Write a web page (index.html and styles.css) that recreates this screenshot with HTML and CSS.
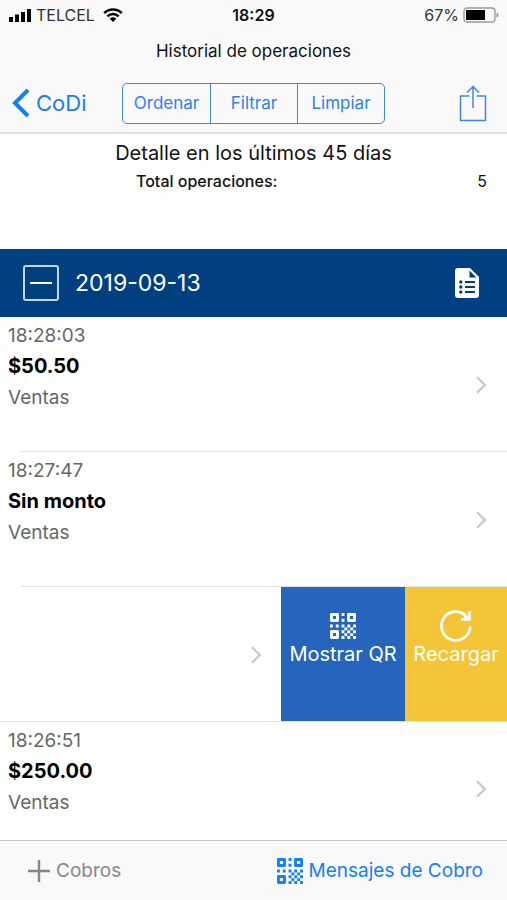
FILE: index.html
```html
<!DOCTYPE html>
<html lang="es">
<head>
<meta charset="utf-8">
<meta name="viewport" content="width=device-width, initial-scale=1">
<title>Historial de operaciones</title>
<link rel="stylesheet" href="styles.css">
</head>
<body>
<svg class="sprite" aria-hidden="true">
  <symbol id="qr" viewBox="0 0 18 18">
    <path fill="none" stroke="currentColor" stroke-width="2" stroke-linejoin="round" d="M1 1h4.200v4.200H1zM12.800 1H17v4.200h-4.200zM1 12.800h4.200V17H1z"/>
    <path fill="currentColor" d="M8 0h2v2H8zM8 4h2v2H8zM0 8h2v2H0zM4 8h2v2H4zM8 8h2v2H8zM12 8h2v2h-2zM16 8h2v2h-2zM10 10h2v2h-2zM14 10h2v2h-2zM8 12h2v2H8zM12 12h2v2h-2zM16 12h2v2h-2zM10 14h2v2h-2zM14 14h2v2h-2zM8 16h2v2H8zM12 16h2v2h-2zM16 16h2v2h-2z"/>
  </symbol>
  <symbol id="chevron" viewBox="0 0 12 18">
    <path fill="none" stroke="currentColor" stroke-width="2.2" d="M2 1.2 9.8 9 2 16.8"/>
  </symbol>
</svg>
<div class="app">
  <header class="top">
    <div class="status">
      <div class="status-left">
        <svg class="signal" viewBox="0 0 24 14" aria-hidden="true"><path d="M1 9h4v5H1zM7 6.500h4V14H7zM13 4h4v10h-4zM19 1h4v13h-4z"/></svg>
        <span>TELCEL</span>
        <svg class="wifi" viewBox="0 0 20 14" aria-hidden="true"><path fill="none" stroke="#000" stroke-width="2.500" d="M1.200 5.200a12.600 12.600 0 0 1 17.600 0M4.400 8.400a8 8 0 0 1 11.200 0"/><path d="M10 14 6.700 10.700a4.700 4.700 0 0 1 6.600 0z"/></svg>
      </div>
      <strong class="clock">18:29</strong>
      <div class="status-right">
        <span>67%</span>
        <svg class="battery" viewBox="0 0 36 16" aria-hidden="true"><rect x="1" y="1" width="31" height="14" rx="3" fill="none" stroke="#999" stroke-width="1.300"/><path d="M3 3h19v10H3z"/><path fill="#999" d="M33.500 5.500q2 .5 2 2.500t-2 2.500z"/></svg>
      </div>
    </div>
    <h1 class="title">Historial de operaciones</h1>
    <nav class="nav">
      <a class="back" href="#codi">
        <svg viewBox="0 0 18 30" aria-hidden="true"><path fill="none" stroke="currentColor" stroke-width="4" d="M16 2 3 15l13 13"/></svg>
        <span>CoDi</span>
      </a>
      <div class="segments">
        <button type="button">Ordenar</button>
        <button type="button">Filtrar</button>
        <button type="button">Limpiar</button>
      </div>
      <button class="share" type="button" aria-label="Compartir">
        <svg viewBox="0 0 28 38" aria-hidden="true"><path fill="none" stroke="currentColor" stroke-width="1.500" d="M10.500 12H1.500v24.500h25V12h-9M14 24V2.500M8 8.500l6-6 6 6"/></svg>
      </button>
    </nav>
  </header>
  <main class="content">
    <section class="summary">
      <h2>Detalle en los últimos 45 días</h2>
      <p class="total"><span>Total operaciones:</span><span class="count">5</span></p>
    </section>
    <div class="day">
      <button class="collapse" type="button" aria-label="Contraer"><svg viewBox="0 0 22 2" aria-hidden="true"><path fill="currentColor" d="M0 0h22v2H0z"/></svg></button>
      <h3>2019-09-13</h3>
      <button class="report" type="button" aria-label="Reporte">
        <svg viewBox="0 0 24 30" aria-hidden="true"><path fill="#fff" d="M3 0h12l9 9v18q0 3-3 3H3q-3 0-3-3V3q0-3 3-3z"/><path fill="#004080" d="M14.500 2.500v7h7zM10 13h10v2H10zM10 18h10v2H10zM10 23h10v2H10z"/><g fill="#004080"><circle cx="5.800" cy="14" r="1.700"/><circle cx="5.800" cy="19" r="1.700"/><circle cx="5.800" cy="24" r="1.700"/></g></svg>
      </button>
    </div>
    <ul class="list">
      <li class="row">
        <div class="info"><time>18:28:03</time><strong>$50.50</strong><span>Ventas</span></div>
        <svg class="chevron" aria-hidden="true"><use href="#chevron"/></svg>
      </li>
      <li class="row">
        <div class="info"><time>18:27:47</time><strong>Sin monto</strong><span>Ventas</span></div>
        <svg class="chevron" aria-hidden="true"><use href="#chevron"/></svg>
      </li>
      <li class="row swiped">
        <svg class="chevron" aria-hidden="true"><use href="#chevron"/></svg>
        <button class="action show" type="button"><svg class="qr" aria-hidden="true"><use href="#qr"/></svg><span>Mostrar QR</span></button>
        <button class="action reload" type="button"><svg class="refresh" viewBox="0 0 32 32" aria-hidden="true"><path fill="none" stroke="#fff" stroke-width="2.700" d="M30.200 16.500A14.400 14.400 0 1 1 26 5.800"/><path fill="#fff" d="M28 1h2.800v9.800H21V8h4l-1.500-1.500 2-2L28 7z"/></svg><span>Recargar</span></button>
      </li>
      <li class="row last">
        <div class="info"><time>18:26:51</time><strong>$250.00</strong><span>Ventas</span></div>
        <svg class="chevron" aria-hidden="true"><use href="#chevron"/></svg>
      </li>
    </ul>
  </main>
  <footer class="toolbar">
    <button class="add" type="button"><svg viewBox="0 0 22 22" aria-hidden="true"><path fill="none" stroke="currentColor" stroke-width="2.400" d="M11 0v22M0 11h22"/></svg><span>Cobros</span></button>
    <button class="messages" type="button"><svg class="qr" aria-hidden="true"><use href="#qr"/></svg><span>Mensajes de Cobro</span></button>
  </footer>
</div>
</body>
</html>
```
FILE: styles.css
```css
* { box-sizing: border-box; }
body {
  margin: 0;
  font-family: Inter, "Liberation Sans", sans-serif;
  color: #111;
  background: #fff;
}
h1, h2, h3, p, ul { margin: 0; padding: 0; font-weight: 400; }
ul { list-style: none; }
button {
  margin: 0;
  padding: 0;
  border: 0;
  background: none;
  font: inherit;
  color: inherit;
}
svg { display: block; flex: none; }
.sprite { position: absolute; width: 0; height: 0; }

.app { display: flex; flex-direction: column; min-height: 100vh; }
.content { flex: 1; display: flex; flex-direction: column; }

.top { background: #f9f9f9; border-bottom: 2px solid #e2e2e2; }
.status {
  display: grid;
  grid-template-columns: 1fr auto 1fr;
  align-items: center;
  height: 30px;
  padding: 0 8px;
  font-size: 16px;
  color: #333;
}
.status-left, .status-right { display: flex; align-items: center; gap: 4px; }
.status-right { justify-content: flex-end; }
.signal { width: 24px; height: 14px; }
.wifi { width: 20px; height: 14px; margin-left: 4px; }
.battery { width: 36px; height: 16px; }
.clock { font-weight: 600; color: #111; }
.title { font-size: 17px; line-height: 42px; text-align: center; }
.nav {
  display: grid;
  grid-template-columns: 1fr auto 1fr;
  align-items: center;
  height: 60px;
  padding: 2px 20px 0;
  color: #157efb;
}
.back {
  display: flex;
  align-items: center;
  gap: 6px;
  margin-left: -8px;
  color: #157efb;
  font-size: 22px;
  text-decoration: none;
}
.back svg { width: 18px; height: 30px; }
.segments {
  display: flex;
  height: 41px;
  border: 1px solid #3f84f0;
  border-radius: 5px;
}
.segments button { width: 87px; font-size: 17px; color: #2f80f3; }
.segments button + button { border-left: 1px solid #3f84f0; }
.share { justify-self: end; color: #3f84f0; }
.share svg { width: 28px; height: 38px; }

.summary { height: 115px; padding: 5px 20px 0; }
.summary h2 { font-size: 20px; line-height: 28px; text-align: center; }
.total {
  display: flex;
  justify-content: space-between;
  padding-left: 116px;
  font-size: 16px;
  line-height: 28px;
  font-weight: 500;
}
.count { font-weight: 400; }

.day {
  display: flex;
  align-items: center;
  height: 68px;
  padding: 0 28px 0 23px;
  background: #004080;
  color: #fff;
}
.day h3 { flex: 1; margin-left: 16px; font-size: 23px; }
.collapse {
  display: grid;
  place-items: center;
  width: 36px;
  height: 36px;
  border: 2px solid #c3d6ea;
  border-radius: 3px;
}
.collapse svg { width: 22px; height: 2px; }
.report svg { width: 24px; height: 30px; }

.list { flex: 1; }
.row {
  display: flex;
  justify-content: space-between;
  align-items: center;
  height: 135px;
  padding: 0 20px 0 8px;
  background: linear-gradient(#e2e2e2, #e2e2e2) 21px 100% / 100% 1px no-repeat;
}
.info {
  align-self: flex-start;
  display: flex;
  flex-direction: column;
  padding-top: 3px;
  font-size: 19px;
  line-height: 31px;
  color: #666;
}
.info strong { font-size: 20px; font-weight: 700; color: #000; }
.chevron { width: 12px; height: 18px; color: #c7c7cc; }
.swiped { padding: 0; align-items: stretch; justify-content: flex-end; background-position: 0 100%; }
.swiped .chevron { align-self: center; margin-right: 19px; }
.action {
  display: flex;
  flex-direction: column;
  align-items: center;
  margin-bottom: 1px;
  color: #fff;
  font-size: 20px;
  line-height: 26px;
}
.show { width: 124px; padding-top: 26px; background: #2565be; }
.reload { width: 102px; padding-top: 23px; background: #f4c637; }
.qr { width: 26px; height: 26px; }
.show .qr { margin-bottom: 2px; }
.refresh { width: 32px; height: 32px; margin-bottom: -1px; }
.last { height: 118px; background: none; }
.last .chevron { align-self: flex-end; margin-bottom: 42px; }

.toolbar {
  display: flex;
  justify-content: space-between;
  align-items: center;
  height: 60px;
  padding: 0 24px 0 28px;
  background: #f9f9f9;
  border-top: 1px solid #c6c6c6;
  font-size: 19px;
}
.toolbar button { display: flex; align-items: center; gap: 6px; }
.toolbar .messages { color: #157efb; }
.add { color: #888; }
.add svg { width: 22px; height: 22px; }
```
